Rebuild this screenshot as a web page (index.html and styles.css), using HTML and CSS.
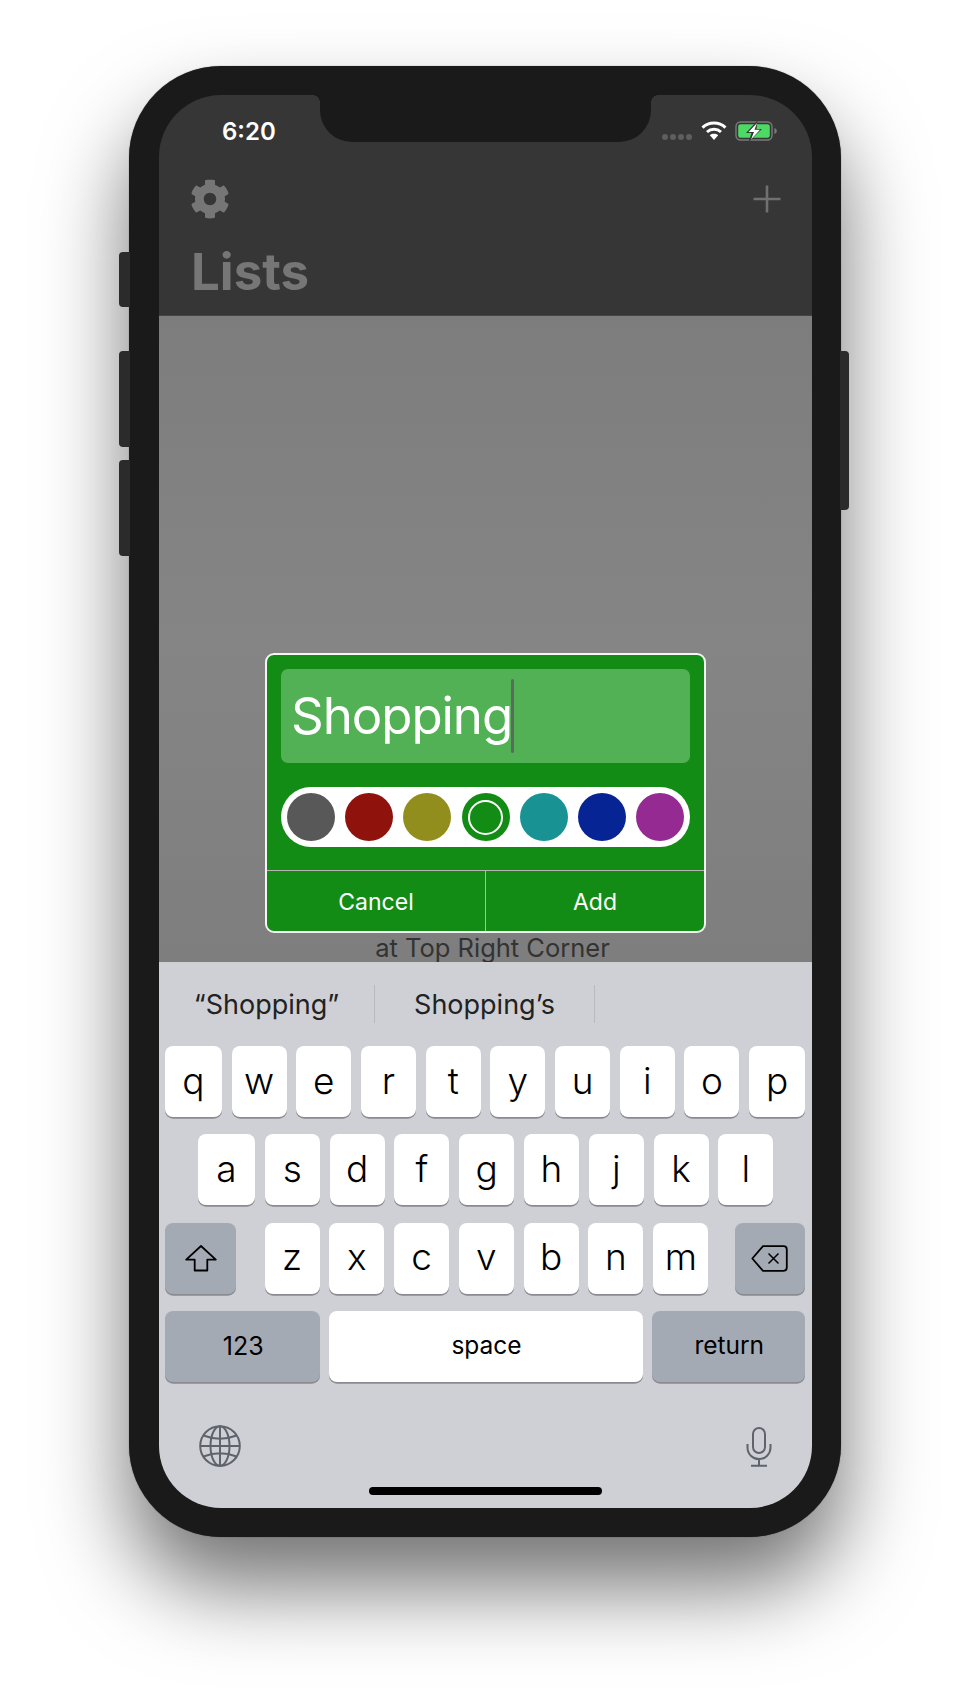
FILE: index.html
```html
<!DOCTYPE html>
<html lang="en">
<head>
    <meta charset="UTF-8">
    <meta name="viewport" content="width=device-width, initial-scale=1.0">
    <title>Lists</title>
    <link rel="stylesheet" href="styles.css">
</head>
<body>
    <div class="phone">
        <!-- side buttons -->
        <div class="side-btn btn-mute"></div>
        <div class="side-btn btn-up"></div>
        <div class="side-btn btn-down"></div>
        <div class="side-btn btn-power"></div>

        <div class="screen">
            <div class="notch"></div>

            <header class="top">
                <div class="status">
                    <span class="time">6:20</span>
                    <div class="status-icons">
                        <div class="signal"><i></i><i></i><i></i><i></i></div>
                        <svg class="wifi" width="26" height="20" viewBox="0 0 26 20">
                            <path d="M1.5 6.6C8 .6 18 .6 24.5 6.6" fill="none" stroke="#fff" stroke-width="3"/>
                            <path d="M6 11C10 7.4 16 7.4 20 11" fill="none" stroke="#fff" stroke-width="3"/>
                            <path d="M8.8 14.2C11.3 12.3 14.7 12.3 17.2 14.2L13 19z" fill="#fff"/>
                        </svg>
                        <svg class="battery" width="43" height="20" viewBox="0 0 43 20">
                            <rect x="1" y="1" width="36" height="18" rx="4.5" fill="none" stroke="#7a7a7a" stroke-width="1.4"/>
                            <rect x="3.2" y="3.2" width="31.6" height="13.6" rx="2.4" fill="#4cd964"/>
                            <path d="M39.4 7c1.6.5 2.4 1.6 2.4 3s-.8 2.500-2.400 3z" fill="#7a7a7a"/>
                            <path d="M22.500 -0.500L11 12H16.500L13.500 21L27 8H21.500z" fill="#363636"/>
                            <path d="M22 2L13.500 11H19L16 18.500L25 8.800H19.500z" fill="#fff"/>
                        </svg>
                    </div>
                </div>
                <div class="toolbar">
                    <svg class="gear" width="40" height="40" viewBox="0 0 512 512">
                        <path fill="#767676" d="M487.400 315.700l-42.600-24.600c4.300-23.200 4.300-47 0-70.200l42.600-24.600c4.900-2.800 7.100-8.600 5.500-14-11.100-35.600-30-67.800-54.700-94.600-3.800-4.100-10-5.100-14.800-2.300L380.800 110c-17.900-15.400-38.500-27.300-60.800-35.100V25.800c0-5.600-3.900-10.500-9.400-11.700-36.700-8.200-74.300-7.800-109.200 0-5.500 1.200-9.400 6.100-9.400 11.700V75c-22.200 7.900-42.800 19.800-60.800 35.100L88.700 85.500c-4.900-2.800-11-1.900-14.800 2.300-24.700 26.700-43.600 58.900-54.700 94.600-1.700 5.400.6 11.200 5.500 14L67.300 221c-4.300 23.200-4.300 47 0 70.200l-42.600 24.600c-4.900 2.800-7.100 8.600-5.500 14 11.100 35.600 30 67.800 54.700 94.600 3.800 4.100 10 5.100 14.800 2.300l42.600-24.600c17.900 15.400 38.500 27.300 60.800 35.100v49.200c0 5.600 3.900 10.500 9.400 11.700 36.700 8.200 74.300 7.800 109.200 0 5.500-1.200 9.400-6.100 9.400-11.700v-49.200c22.200-7.900 42.800-19.800 60.800-35.100l42.600 24.600c4.900 2.800 11 1.900 14.800-2.300 24.700-26.700 43.600-58.900 54.700-94.600 1.500-5.500-.7-11.300-5.600-14.100zM256 336c-44.100 0-80-35.900-80-80s35.900-80 80-80 80 35.900 80 80-35.900 80-80 80z"/>
                    </svg>
                    <svg class="plus" width="28" height="28" viewBox="0 0 28 28">
                        <path d="M14 .5V27.500M.5 14H27.500" stroke="#707070" stroke-width="2.600" fill="none"/>
                    </svg>
                </div>
                <h1 class="title">Lists</h1>
            </header>

            <main class="content">
                <div class="dialog">
                    <div class="dialog-body">
                        <div class="name-input"><span class="name-text">Shopping</span><span class="caret"></span></div>
                        <div class="swatches">
                            <span class="swatch c-grey"></span>
                            <span class="swatch c-red"></span>
                            <span class="swatch c-olive"></span>
                            <span class="swatch c-green selected"></span>
                            <span class="swatch c-teal"></span>
                            <span class="swatch c-blue"></span>
                            <span class="swatch c-purple"></span>
                        </div>
                    </div>
                    <div class="dialog-actions">
                        <div class="action">Cancel</div>
                        <div class="action">Add</div>
                    </div>
                </div>
                <div class="hint">at Top Right Corner</div>
            </main>

            <section class="keyboard">
                <div class="suggestions">
                    <div class="suggestion">“Shopping”</div>
                    <div class="suggestion">Shopping’s</div>
                    <div class="suggestion last"></div>
                </div>
                <div class="row row-1">
                    <div class="key wide">q</div><div class="key">w</div><div class="key">e</div><div class="key">r</div><div class="key">t</div><div class="key">y</div><div class="key">u</div><div class="key">i</div><div class="key">o</div><div class="key wide">p</div>
                </div>
                <div class="row row-2">
                    <div class="key a-key">a</div><div class="key">s</div><div class="key">d</div><div class="key">f</div><div class="key">g</div><div class="key">h</div><div class="key">j</div><div class="key">k</div><div class="key">l</div>
                </div>
                <div class="row row-3">
                    <div class="key dark shift">
                        <svg width="32" height="27" viewBox="0 0 32 27">
                            <path d="M16 1L1.200 14.600H9.700V25.500H22.300V14.600H30.800z" fill="none" stroke="#000" stroke-width="1.800" stroke-linejoin="round"/>
                        </svg>
                    </div>
                    <div class="letters">
                        <div class="key">z</div><div class="key">x</div><div class="key">c</div><div class="key">v</div><div class="key">b</div><div class="key">n</div><div class="key">m</div>
                    </div>
                    <div class="key dark delete">
                        <svg width="37" height="27" viewBox="0 0 37 27">
                            <path d="M12 1.200H32.500Q35.800 1.200 35.800 4.500V22.500Q35.800 25.800 32.500 25.800H12L1.300 13.500z" fill="none" stroke="#000" stroke-width="1.800" stroke-linejoin="round"/>
                            <path d="M17.500 8.500L27.500 18.500M27.500 8.500L17.500 18.500" stroke="#000" stroke-width="1.500" fill="none"/>
                        </svg>
                    </div>
                </div>
                <div class="row row-4">
                    <div class="key dark small num">123</div>
                    <div class="key small space">space</div>
                    <div class="key dark small ret">return</div>
                </div>
                <div class="kb-bottom">
                    <svg width="42" height="42" viewBox="0 0 42 42" fill="none" stroke="#5f636b" stroke-width="2">
                        <circle cx="21" cy="21" r="19.800"/>
                        <ellipse cx="21" cy="21" rx="9.500" ry="19.800"/>
                        <path d="M21 1.200V40.800M1.200 21H40.800M4.500 10.500Q21 17 37.500 10.500M4.500 31.500Q21 25 37.500 31.500"/>
                    </svg>
                    <svg class="mic" width="26" height="40" viewBox="0 0 26 40" fill="none" stroke="#5f636b" stroke-width="2">
                        <rect x="7" y="1" width="12" height="25" rx="6"/>
                        <path d="M1.500 17V20.500C1.500 27 6.500 32 13 32S24.500 27 24.500 20.500V17M13 32V38.500M5 38.800H21"/>
                    </svg>
                </div>
                <div class="home-bar"></div>
            </section>
        </div>
    </div>
</body>
</html>
```

FILE: styles.css
```css
body {
    margin: 0;
    padding: 66px 0 0 129px;
    height: 1700px;
    box-sizing: border-box;
    background: #fff;
    font-family: 'Inter', 'Liberation Sans', sans-serif;
    overflow: hidden;
}

.phone {
    position: relative;
    width: 712px;
    height: 1471px;
    box-sizing: border-box;
    padding: 29px 29px 29px 30px;
    background: #1a1a1a;
    border-radius: 92px;
    box-shadow: 0 50px 85px rgba(0, 0, 0, 0.55), 0 0 1px rgba(0, 0, 0, 0.6);
}

.side-btn {
    position: absolute;
    background: #2b2b2b;
    width: 11px;
    left: -10px;
    border-radius: 4px 0 0 4px;
}

.btn-mute { top: 186px; height: 55px; }
.btn-up { top: 285px; height: 96px; }
.btn-down { top: 394px; height: 96px; }
.btn-power { left: auto; right: -8px; width: 9px; top: 285px; height: 159px; border-radius: 0 4px 4px 0; }

.screen {
    position: relative;
    height: 1413px;
    overflow: hidden;
    border-radius: 62px;
    display: flex;
    flex-direction: column;
}

.notch {
    position: absolute;
    top: 0;
    left: 161px;
    width: 331px;
    height: 47px;
    background: #1a1a1a;
    border-radius: 0 0 32px 32px;
}

.notch::before,
.notch::after {
    content: "";
    position: absolute;
    top: 0;
    width: 7px;
    height: 7px;
}

.notch::before {
    left: -7px;
    background: radial-gradient(circle at 0 100%, transparent 6.5px, #1a1a1a 7px);
}

.notch::after {
    right: -7px;
    background: radial-gradient(circle at 100% 100%, transparent 6.5px, #1a1a1a 7px);
}

/* header */
.top {
    height: 221px;
    flex: none;
    box-sizing: border-box;
    background: #363636;
    padding: 0 34px;
    border-bottom: 1px solid #444;
}

.status {
    height: 58px;
    display: flex;
    justify-content: space-between;
    align-items: flex-start;
}

.time {
    margin: 22px 0 0 29px;
    color: #fff;
    font-size: 24px;
    font-weight: 600;
    line-height: 30px;
}

.status-icons {
    display: flex;
    align-items: flex-start;
    padding-top: 26px;
}

.signal {
    display: flex;
    gap: 2.200px;
    margin: 13px 9px 0 0;
}

.signal i {
    width: 5.800px;
    height: 5.800px;
    border-radius: 50%;
    background: #5e5e5e;
}

.wifi { margin-right: 8px; }

.battery { overflow: visible; }

.toolbar {
    height: 40px;
    margin-top: 26px;
    display: flex;
    justify-content: space-between;
    align-items: center;
}

.gear { margin-left: -3px; }

.plus { margin-right: -3px; }

.title {
    margin: 23px 0 0 -2px;
    color: #767676;
    font-size: 51px;
    line-height: 60px;
    font-weight: 700;
}

/* dimmed list area */
.content {
    height: 646px;
    flex: none;
    background: linear-gradient(#7d7d7d, #858585 50%, #7e7e7e);
    display: flex;
    flex-direction: column;
    align-items: center;
    justify-content: flex-end;
    overflow: hidden;
}

.dialog {
    width: 441px;
    height: 280px;
    box-sizing: border-box;
    background: #128c14;
    border: 2px solid #f4f4f4;
    border-radius: 9px;
    display: flex;
    flex-direction: column;
}

.dialog-body {
    flex: 1;
    padding: 14px 14px 0 14px;
}

.name-input {
    height: 94px;
    background: #53b155;
    border-radius: 7px;
    display: flex;
    align-items: center;
    padding-left: 10px;
}

.name-text {
    color: #fff;
    font-size: 51px;
    line-height: 60px;
    letter-spacing: -1.070px;
}

.caret {
    width: 3px;
    height: 74px;
    border-radius: 1.500px;
    background: #5a6a5c;
    margin-left: -1px;
}

.swatches {
    margin-top: 24px;
    height: 60px;
    background: #fff;
    border-radius: 30px;
    display: flex;
    align-items: center;
    justify-content: center;
    gap: 10.300px;
}

.swatch {
    width: 48px;
    height: 48px;
    border-radius: 50%;
    box-sizing: border-box;
}

.c-grey { background: #585858; }
.c-red { background: #8f130c; }
.c-olive { background: #928e1e; }
.c-green { background: #128c14; }
.c-teal { background: #189293; }
.c-blue { background: #062494; }
.c-purple { background: #942a92; }

.selected {
    display: flex;
    align-items: center;
    justify-content: center;
}

.selected::after {
    content: "";
    width: 35px;
    height: 35px;
    box-sizing: border-box;
    border: 2.500px solid #fff;
    border-radius: 50%;
}

.dialog-actions {
    height: 60px;
    display: flex;
    border-top: 1px solid #b5b5b5;
}

.action {
    flex: 1;
    display: flex;
    align-items: center;
    justify-content: center;
    padding-top: 2px;
    color: #fff;
    font-size: 23px;
}

.action:first-child {
    border-right: 1px solid #b5b5b5;
}

.hint {
    height: 29px;
    line-height: 29px;
    padding-left: 14px;
    color: #333;
    font-size: 25.500px;
}

/* keyboard */
.keyboard {
    flex: 1;
    background: #ced0d6;
    display: flex;
    flex-direction: column;
    padding: 0 7px 0 6px;
}

.suggestions {
    height: 84px;
    flex: none;
    display: flex;
    margin: 0 -7px 0 -6px;
}

.suggestion {
    width: 216px;
    height: 38px;
    margin-top: 23px;
    box-sizing: border-box;
    border-right: 1px solid #b7bac1;
    text-align: center;
    line-height: 40px;
    font-size: 27px;
    color: #222;
}

.suggestion:nth-child(2) { width: 220px; }
.suggestion.last { flex: 1; border: none; }

.row {
    display: flex;
    gap: 9.800px;
    height: 71px;
    margin-bottom: 17.300px;
}

.row-1 { gap: 9.700px; }
.row-1 .key.wide:first-child { width: 57px; }
.row-2 { padding-left: 33px; }
.row-3 { gap: 0; }
.row-4 { gap: 9px; }

.letters {
    display: flex;
    gap: 9.800px;
    margin-left: 29px;
}

.key {
    width: 55px;
    height: 71px;
    box-sizing: border-box;
    background: #fff;
    border-radius: 8px;
    box-shadow: 0 1.700px 0 #898b90;
    display: flex;
    align-items: center;
    justify-content: center;
    padding-bottom: 3px;
    color: #000;
    font-size: 37px;
    font-weight: 350;
}

.key.wide { width: 56px; }
.key.a-key { width: 57px; }
.key.dark { background: #a4aab4; }
.key.shift, .key.delete { width: 70.500px; padding-bottom: 0; }
.key.shift svg { margin-left: 2px; }
.key.delete { margin-left: auto; }
.key.small { font-size: 25px; font-weight: 400; padding: 0 0 0 2px; }
.key.num { width: 154.500px; }
.key.space { width: 314px; }
.key.ret { flex: 1; }
.key.space, .key.ret { font-size: 24.500px; padding-bottom: 3px; }

.kb-bottom {
    height: 42px;
    flex: none;
    margin-top: 26px;
    padding: 0 33px 0 34px;
    display: flex;
    justify-content: space-between;
    align-items: flex-start;
}

.mic { margin-top: 2px; }

.home-bar {
    width: 233px;
    height: 8px;
    flex: none;
    align-self: center;
    margin-top: 20px;
    border-radius: 4px;
    background: #000;
}
```
